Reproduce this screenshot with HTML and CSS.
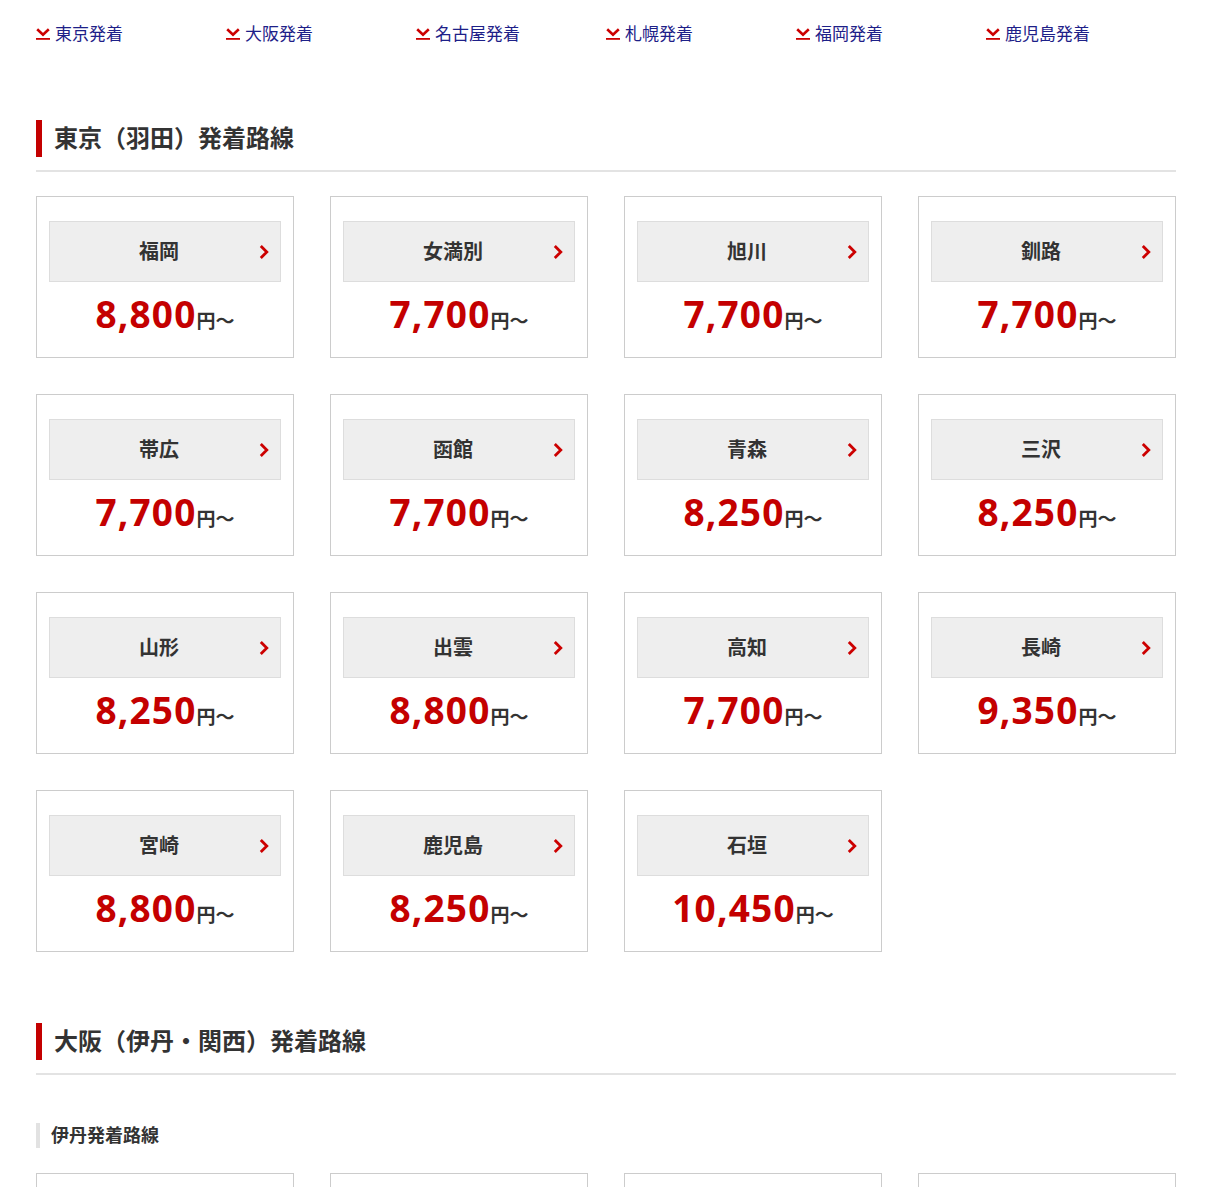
FILE: index.html
```html
<!DOCTYPE html>
<html lang="ja">
<head>
<meta charset="utf-8">
<title>路線一覧</title>
<link rel="stylesheet" href="styles.css">
</head>
<body>
<div class="page">
  <nav class="anchors">
    <a class="anchor" href="#tokyo"><svg class="anchor-icon" width="14" height="12" viewBox="0 0 14 12"><polyline points="1.2,1.2 7,6.6 12.8,1.2" fill="none" stroke="#c00" stroke-width="2.6"/><rect x="0" y="10" width="14" height="1.8" fill="#c00"/></svg><span>東京発着</span></a>
    <a class="anchor" href="#osaka"><svg class="anchor-icon" width="14" height="12" viewBox="0 0 14 12"><polyline points="1.2,1.2 7,6.6 12.8,1.2" fill="none" stroke="#c00" stroke-width="2.6"/><rect x="0" y="10" width="14" height="1.8" fill="#c00"/></svg><span>大阪発着</span></a>
    <a class="anchor" href="#nagoya"><svg class="anchor-icon" width="14" height="12" viewBox="0 0 14 12"><polyline points="1.2,1.2 7,6.6 12.8,1.2" fill="none" stroke="#c00" stroke-width="2.6"/><rect x="0" y="10" width="14" height="1.8" fill="#c00"/></svg><span>名古屋発着</span></a>
    <a class="anchor" href="#sapporo"><svg class="anchor-icon" width="14" height="12" viewBox="0 0 14 12"><polyline points="1.2,1.2 7,6.6 12.8,1.2" fill="none" stroke="#c00" stroke-width="2.6"/><rect x="0" y="10" width="14" height="1.8" fill="#c00"/></svg><span>札幌発着</span></a>
    <a class="anchor" href="#fukuoka"><svg class="anchor-icon" width="14" height="12" viewBox="0 0 14 12"><polyline points="1.2,1.2 7,6.6 12.8,1.2" fill="none" stroke="#c00" stroke-width="2.6"/><rect x="0" y="10" width="14" height="1.8" fill="#c00"/></svg><span>福岡発着</span></a>
    <a class="anchor" href="#kagoshima"><svg class="anchor-icon" width="14" height="12" viewBox="0 0 14 12"><polyline points="1.2,1.2 7,6.6 12.8,1.2" fill="none" stroke="#c00" stroke-width="2.6"/><rect x="0" y="10" width="14" height="1.8" fill="#c00"/></svg><span>鹿児島発着</span></a>
  </nav>

  <section class="section section-first" id="tokyo">
    <h2 class="section-title"><span class="section-title-text">東京（羽田）発着路線</span></h2>
    <div class="cards">
      <a class="card" href="#"><span class="card-btn"><span class="card-name">福岡</span><svg class="chev" width="10" height="16" viewBox="0 0 10 16"><polyline points="1.8,2 7.8,8 1.8,14" fill="none" stroke="#c00" stroke-width="2.8"/></svg></span><span class="price"><span class="price-num">8,800</span><span class="price-unit">円～</span></span></a>
      <a class="card" href="#"><span class="card-btn"><span class="card-name">女満別</span><svg class="chev" width="10" height="16" viewBox="0 0 10 16"><polyline points="1.8,2 7.8,8 1.8,14" fill="none" stroke="#c00" stroke-width="2.8"/></svg></span><span class="price"><span class="price-num">7,700</span><span class="price-unit">円～</span></span></a>
      <a class="card" href="#"><span class="card-btn"><span class="card-name">旭川</span><svg class="chev" width="10" height="16" viewBox="0 0 10 16"><polyline points="1.8,2 7.8,8 1.8,14" fill="none" stroke="#c00" stroke-width="2.8"/></svg></span><span class="price"><span class="price-num">7,700</span><span class="price-unit">円～</span></span></a>
      <a class="card" href="#"><span class="card-btn"><span class="card-name">釧路</span><svg class="chev" width="10" height="16" viewBox="0 0 10 16"><polyline points="1.8,2 7.8,8 1.8,14" fill="none" stroke="#c00" stroke-width="2.8"/></svg></span><span class="price"><span class="price-num">7,700</span><span class="price-unit">円～</span></span></a>
      <a class="card" href="#"><span class="card-btn"><span class="card-name">帯広</span><svg class="chev" width="10" height="16" viewBox="0 0 10 16"><polyline points="1.8,2 7.8,8 1.8,14" fill="none" stroke="#c00" stroke-width="2.8"/></svg></span><span class="price"><span class="price-num">7,700</span><span class="price-unit">円～</span></span></a>
      <a class="card" href="#"><span class="card-btn"><span class="card-name">函館</span><svg class="chev" width="10" height="16" viewBox="0 0 10 16"><polyline points="1.8,2 7.8,8 1.8,14" fill="none" stroke="#c00" stroke-width="2.8"/></svg></span><span class="price"><span class="price-num">7,700</span><span class="price-unit">円～</span></span></a>
      <a class="card" href="#"><span class="card-btn"><span class="card-name">青森</span><svg class="chev" width="10" height="16" viewBox="0 0 10 16"><polyline points="1.8,2 7.8,8 1.8,14" fill="none" stroke="#c00" stroke-width="2.8"/></svg></span><span class="price"><span class="price-num">8,250</span><span class="price-unit">円～</span></span></a>
      <a class="card" href="#"><span class="card-btn"><span class="card-name">三沢</span><svg class="chev" width="10" height="16" viewBox="0 0 10 16"><polyline points="1.8,2 7.8,8 1.8,14" fill="none" stroke="#c00" stroke-width="2.8"/></svg></span><span class="price"><span class="price-num">8,250</span><span class="price-unit">円～</span></span></a>
      <a class="card" href="#"><span class="card-btn"><span class="card-name">山形</span><svg class="chev" width="10" height="16" viewBox="0 0 10 16"><polyline points="1.8,2 7.8,8 1.8,14" fill="none" stroke="#c00" stroke-width="2.8"/></svg></span><span class="price"><span class="price-num">8,250</span><span class="price-unit">円～</span></span></a>
      <a class="card" href="#"><span class="card-btn"><span class="card-name">出雲</span><svg class="chev" width="10" height="16" viewBox="0 0 10 16"><polyline points="1.8,2 7.8,8 1.8,14" fill="none" stroke="#c00" stroke-width="2.8"/></svg></span><span class="price"><span class="price-num">8,800</span><span class="price-unit">円～</span></span></a>
      <a class="card" href="#"><span class="card-btn"><span class="card-name">高知</span><svg class="chev" width="10" height="16" viewBox="0 0 10 16"><polyline points="1.8,2 7.8,8 1.8,14" fill="none" stroke="#c00" stroke-width="2.8"/></svg></span><span class="price"><span class="price-num">7,700</span><span class="price-unit">円～</span></span></a>
      <a class="card" href="#"><span class="card-btn"><span class="card-name">長崎</span><svg class="chev" width="10" height="16" viewBox="0 0 10 16"><polyline points="1.8,2 7.8,8 1.8,14" fill="none" stroke="#c00" stroke-width="2.8"/></svg></span><span class="price"><span class="price-num">9,350</span><span class="price-unit">円～</span></span></a>
      <a class="card" href="#"><span class="card-btn"><span class="card-name">宮崎</span><svg class="chev" width="10" height="16" viewBox="0 0 10 16"><polyline points="1.8,2 7.8,8 1.8,14" fill="none" stroke="#c00" stroke-width="2.8"/></svg></span><span class="price"><span class="price-num">8,800</span><span class="price-unit">円～</span></span></a>
      <a class="card" href="#"><span class="card-btn"><span class="card-name">鹿児島</span><svg class="chev" width="10" height="16" viewBox="0 0 10 16"><polyline points="1.8,2 7.8,8 1.8,14" fill="none" stroke="#c00" stroke-width="2.8"/></svg></span><span class="price"><span class="price-num">8,250</span><span class="price-unit">円～</span></span></a>
      <a class="card" href="#"><span class="card-btn"><span class="card-name">石垣</span><svg class="chev" width="10" height="16" viewBox="0 0 10 16"><polyline points="1.8,2 7.8,8 1.8,14" fill="none" stroke="#c00" stroke-width="2.8"/></svg></span><span class="price"><span class="price-num">10,450</span><span class="price-unit">円～</span></span></a>
    </div>
  </section>

  <section class="section" id="osaka">
    <h2 class="section-title"><span class="section-title-text">大阪（伊丹・関西）発着路線</span></h2>
    <h3 class="sub-title">伊丹発着路線</h3>
    <div class="cards">
      <a class="card" href="#"><span class="card-btn"><span class="card-name">新潟</span><svg class="chev" width="10" height="16" viewBox="0 0 10 16"><polyline points="1.8,2 7.8,8 1.8,14" fill="none" stroke="#c00" stroke-width="2.8"/></svg></span><span class="price"><span class="price-num">7,700</span><span class="price-unit">円～</span></span></a>
      <a class="card" href="#"><span class="card-btn"><span class="card-name">仙台</span><svg class="chev" width="10" height="16" viewBox="0 0 10 16"><polyline points="1.8,2 7.8,8 1.8,14" fill="none" stroke="#c00" stroke-width="2.8"/></svg></span><span class="price"><span class="price-num">7,700</span><span class="price-unit">円～</span></span></a>
      <a class="card" href="#"><span class="card-btn"><span class="card-name">福岡</span><svg class="chev" width="10" height="16" viewBox="0 0 10 16"><polyline points="1.8,2 7.8,8 1.8,14" fill="none" stroke="#c00" stroke-width="2.8"/></svg></span><span class="price"><span class="price-num">7,700</span><span class="price-unit">円～</span></span></a>
      <a class="card" href="#"><span class="card-btn"><span class="card-name">鹿児島</span><svg class="chev" width="10" height="16" viewBox="0 0 10 16"><polyline points="1.8,2 7.8,8 1.8,14" fill="none" stroke="#c00" stroke-width="2.8"/></svg></span><span class="price"><span class="price-num">7,700</span><span class="price-unit">円～</span></span></a>
    </div>
  </section>
</div>
</body>
</html>
```

FILE: styles.css
```css
* { box-sizing: border-box; }
html, body { margin: 0; padding: 0; background: #fff; }
body {
  font-family: "Noto Sans CJK JP", "Noto Sans", sans-serif;
  color: #333;
}
.page {
  width: 1176px;
  padding-left: 36px;
}
.anchors {
  display: grid;
  grid-template-columns: repeat(6, 190px);
  padding-top: 22px;
}
.anchor {
  display: flex;
  align-items: center;
  gap: 5px;
  color: #1d2088;
  text-decoration: none;
  font-size: 17px;
  line-height: 22px;
}
.anchor-icon { display: block; margin-top: 2px; flex: none; }

.section { margin-top: 71px; }
.section-first { margin-top: 76px; }

.section-title {
  margin: 0;
  padding-bottom: 13px;
  border-bottom: 2px solid #e3e3e3;
}
.section-title-text {
  display: block;
  border-left: 6px solid #c40000;
  padding-left: 12px;
  padding-bottom: 4px;
  font-size: 24px;
  line-height: 33px;
  font-weight: 700;
  color: #333;
}
.sub-title {
  margin: 48px 0 0;
  border-left: 4px solid #e2e2e2;
  padding-left: 11px;
  padding-bottom: 2px;
  font-size: 18px;
  line-height: 23px;
  font-weight: 700;
  color: #333;
}
.cards {
  display: grid;
  grid-template-columns: repeat(4, 258px);
  gap: 36px;
  margin-top: 24px;
}
.sub-title + .cards { margin-top: 25px; }
.card {
  display: block;
  border: 1px solid #cccccc;
  padding: 24px 12px 0;
  height: 162px;
  text-decoration: none;
}
.card-btn {
  display: flex;
  align-items: center;
  height: 61px;
  background: #eeeeee;
  border: 1px solid #dddddd;
  padding-left: 9px;
}
.card-name {
  flex: 1;
  text-align: center;
  font-size: 20px;
  font-weight: 700;
  color: #333;
  padding-bottom: 3px;
}
.chev {
  display: block;
  flex: none;
  margin-right: 11px;
}
.price {
  display: block;
  text-align: center;
  padding-top: 8px;
  line-height: 48px;
  white-space: nowrap;
}
.price-num {
  font-family: "Noto Sans", "Noto Sans CJK JP", sans-serif;
  font-size: 37px;
  font-weight: 700;
  color: #c40000;
  letter-spacing: 1.2px;
}
.price-unit {
  font-size: 19px;
  font-weight: 700;
  color: #333;
}
```
